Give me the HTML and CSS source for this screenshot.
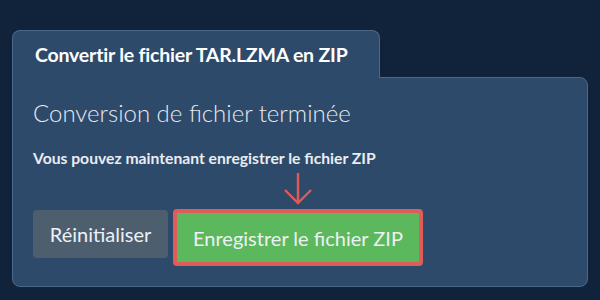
FILE: index.html
```html
<!DOCTYPE html>
<html lang="fr">
<head>
    <meta charset="UTF-8">
    <meta name="viewport" content="width=device-width, initial-scale=1.0">
    <title>Convertir TAR.LZMA en ZIP</title>
    <link rel="stylesheet" href="styles.css">
</head>
<body>
    <div class="converter">
        <div class="tab">Convertir le fichier TAR.LZMA en ZIP</div>

        <div class="panel">
            <h2 class="status">Conversion de fichier terminée</h2>
            <p class="hint">Vous pouvez maintenant enregistrer le fichier ZIP</p>

            <div class="actions">
                <button class="btn reset">Réinitialiser</button>
                <div class="save-wrap">
                    <svg class="arrow" width="30" height="32" viewBox="0 0 30 32">
                        <path d="M15 0 V30 M2 17 L15 30 L28 17" fill="none" stroke="#e05a57" stroke-width="2.4"/>
                    </svg>
                    <button class="btn save">Enregistrer le fichier ZIP</button>
                </div>
            </div>
        </div>
    </div>
</body>
</html>
```

FILE: styles.css
```css
* {
    margin: 0;
    padding: 0;
    box-sizing: border-box;
    font-family: 'Lato', 'Liberation Sans', sans-serif;
}

body {
    background: #11233a;
    width: 600px;
    height: 300px;
    padding: 30px 12px 0 12px;
    overflow: hidden;
}

.converter {
    display: flex;
    flex-direction: column;
    align-items: flex-start;
}

.tab {
    position: relative;
    z-index: 1;
    width: 368px;
    height: 48px;
    margin-bottom: -1px;
    padding: 0 0 0 22px;
    display: flex;
    align-items: center;
    background: #2e4a6b;
    border: 1px solid #4a6889;
    border-bottom: none;
    border-radius: 8px 8px 0 0;
    color: #ffffff;
    font-size: 19.5px;
    font-weight: bold;
    letter-spacing: -0.2px;
}

.panel {
    width: 576px;
    height: 210px;
    background: #2e4a6b;
    border: 1px solid #4a6889;
    border-radius: 0 8px 8px 8px;
    padding: 20px 20px 0 20px;
}

.status {
    font-size: 24px;
    font-weight: 300;
    color: #e6e9ee;
    line-height: 30px;
}

.hint {
    margin-top: 20px;
    font-size: 15.7px;
    font-weight: bold;
    color: #e9edf2;
    line-height: 20px;
}

.actions {
    display: flex;
    align-items: flex-end;
    gap: 5px;
    margin-top: 5px;
}

.btn {
    border: none;
    color: #eef1f4;
    font-size: 20px;
    font-weight: normal;
    cursor: pointer;
}

.reset {
    width: 135px;
    height: 48px;
    margin-bottom: 8px;
    background: #4d5e6f;
    border-radius: 4px;
}

.save-wrap {
    display: flex;
    flex-direction: column;
    align-items: center;
}

.arrow {
    display: block;
    margin-bottom: 4px;
}

.save {
    width: 250px;
    height: 57px;
    background: #5cb85c;
    border: 4px solid #df5c5a;
    border-radius: 4px;
}
```
